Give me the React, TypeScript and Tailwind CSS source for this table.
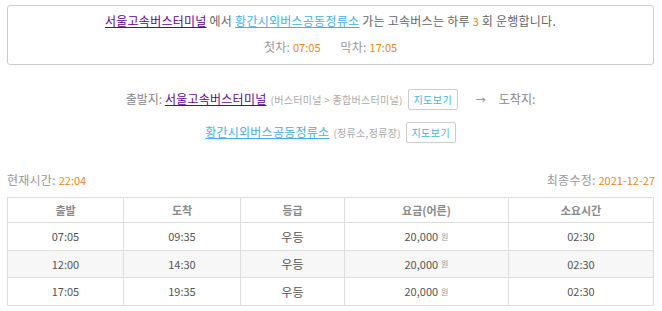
import React from "react";

const rows = [
  ["07:05", "09:35", "우등", "20,000", "02:30"],
  ["12:00", "14:30", "우등", "20,000", "02:30"],
  ["17:05", "19:35", "우등", "20,000", "02:30"],
];

function MapButton() {
  return (
    <span className="inline-flex h-[21px] w-[50px] items-center justify-center rounded-[2px] border border-[#cccccc] bg-white text-[10px] tracking-[0.5px] text-[#45b1e6]">
      지도보기
    </span>
  );
}

export default function App() {
  return (
    <div
      className="w-[662px] h-[311px] bg-white pt-[5px] pl-[7px]"
      style={{ fontFamily: '"Noto Sans CJK KR", "Noto Sans", sans-serif' }}
    >
      <div className="w-[647px]">
        {/* summary box */}
        <div className="h-[60px] rounded-[3px] border border-[#cccccc] pt-[5px] text-[12px] tracking-[0.25px] text-[#666666]">
          <div className="flex h-[20px] items-center justify-center whitespace-pre">
            <span className="text-[#660099] underline">서울고속버스터미널</span>
            <span> 에서 </span>
            <span className="text-[#3fb2ea] underline">황간시외버스공동정류소</span>
            <span> 가는 고속버스는 하루 </span>
            <span className="text-[11px] tracking-normal text-[#f58220]">3</span>
            <span> 회 운행합니다.</span>
          </div>
          <div className="mt-[6px] flex h-[20px] items-center justify-center whitespace-pre">
            <span className="text-[#999999]">첫차: </span>
            <span className="text-[11px] tracking-normal text-[#f58220]">07:05</span>
            <span className="ml-[20px] text-[#999999]">막차: </span>
            <span className="text-[11px] tracking-normal text-[#f58220]">17:05</span>
          </div>
        </div>

        {/* from / to */}
        <div className="mt-[23px] flex h-[22px] items-center justify-center whitespace-pre text-[12px] text-[#888888]">
          <span>출발지: </span>
          <span className="tracking-[0.25px] text-[#660099] underline">서울고속버스터미널</span>
          <span className="ml-[4px] text-[10px] tracking-[0.3px] text-[#aaaaaa]">(버스터미널 &gt; 종합버스터미널)</span>
          <span className="ml-[5px]">
            <MapButton />
          </span>
          <span className="ml-[18px] text-[10px] text-[#888888]">→</span>
          <span className="ml-[13px]">도착지:</span>
        </div>
        <div className="mt-[11px] flex h-[22px] items-center justify-center whitespace-pre text-[12px] tracking-[0.25px] text-[#888888]">
          <span className="text-[#3fb2ea] underline">황간시외버스공동정류소</span>
          <span className="ml-[4px] text-[10px] tracking-[0.3px] text-[#aaaaaa]">(정류소,정류장)</span>
          <span className="ml-[5px]">
            <MapButton />
          </span>
        </div>

        {/* info row */}
        <div className="mt-[29px] flex h-[16px] w-[648px] items-center justify-between whitespace-pre text-[12px] tracking-[0.25px]">
          <div>
            <span className="text-[#999999]">현재시간: </span>
            <span className="text-[11px] tracking-normal text-[#f58220]">22:04</span>
          </div>
          <div>
            <span className="text-[#999999]">최종수정: </span>
            <span className="text-[11px] tracking-normal text-[#f58220]">2021-12-27</span>
          </div>
        </div>

        {/* table */}
        <div className="mt-[9px] grid grid-cols-[116px_117px_104px_164px_145px] border-l border-t border-[#dddddd] text-[11px] text-[#555555]">
          {["출발", "도착", "등급", "요금(어른)", "소요시간"].map((h) => (
            <div
              key={h}
              className="flex h-[25px] items-center justify-center border-b border-r border-[#dddddd] text-[11px] font-bold text-[#8a8a8a]"
            >
              {h}
            </div>
          ))}
          {rows.map((r, i) =>
            r.map((c, j) => (
              <div
                key={`${i}-${j}`}
                className={`flex items-center justify-center border-b border-r border-[#dddddd] ${
                  i === 1 ? "h-[27px] bg-[#f7f7f7]" : "h-[28px] bg-white"
                }`}
              >
                {j === 3 ? (
                  <>
                    <span>{c}</span>
                    <span className="ml-[3px] text-[8px] text-[#999999]">원</span>
                  </>
                ) : j === 2 ? (
                  <span className="text-[12px] tracking-[0.25px]">{c}</span>
                ) : (
                  c
                )}
              </div>
            ))
          )}
        </div>
      </div>
    </div>
  );
}
